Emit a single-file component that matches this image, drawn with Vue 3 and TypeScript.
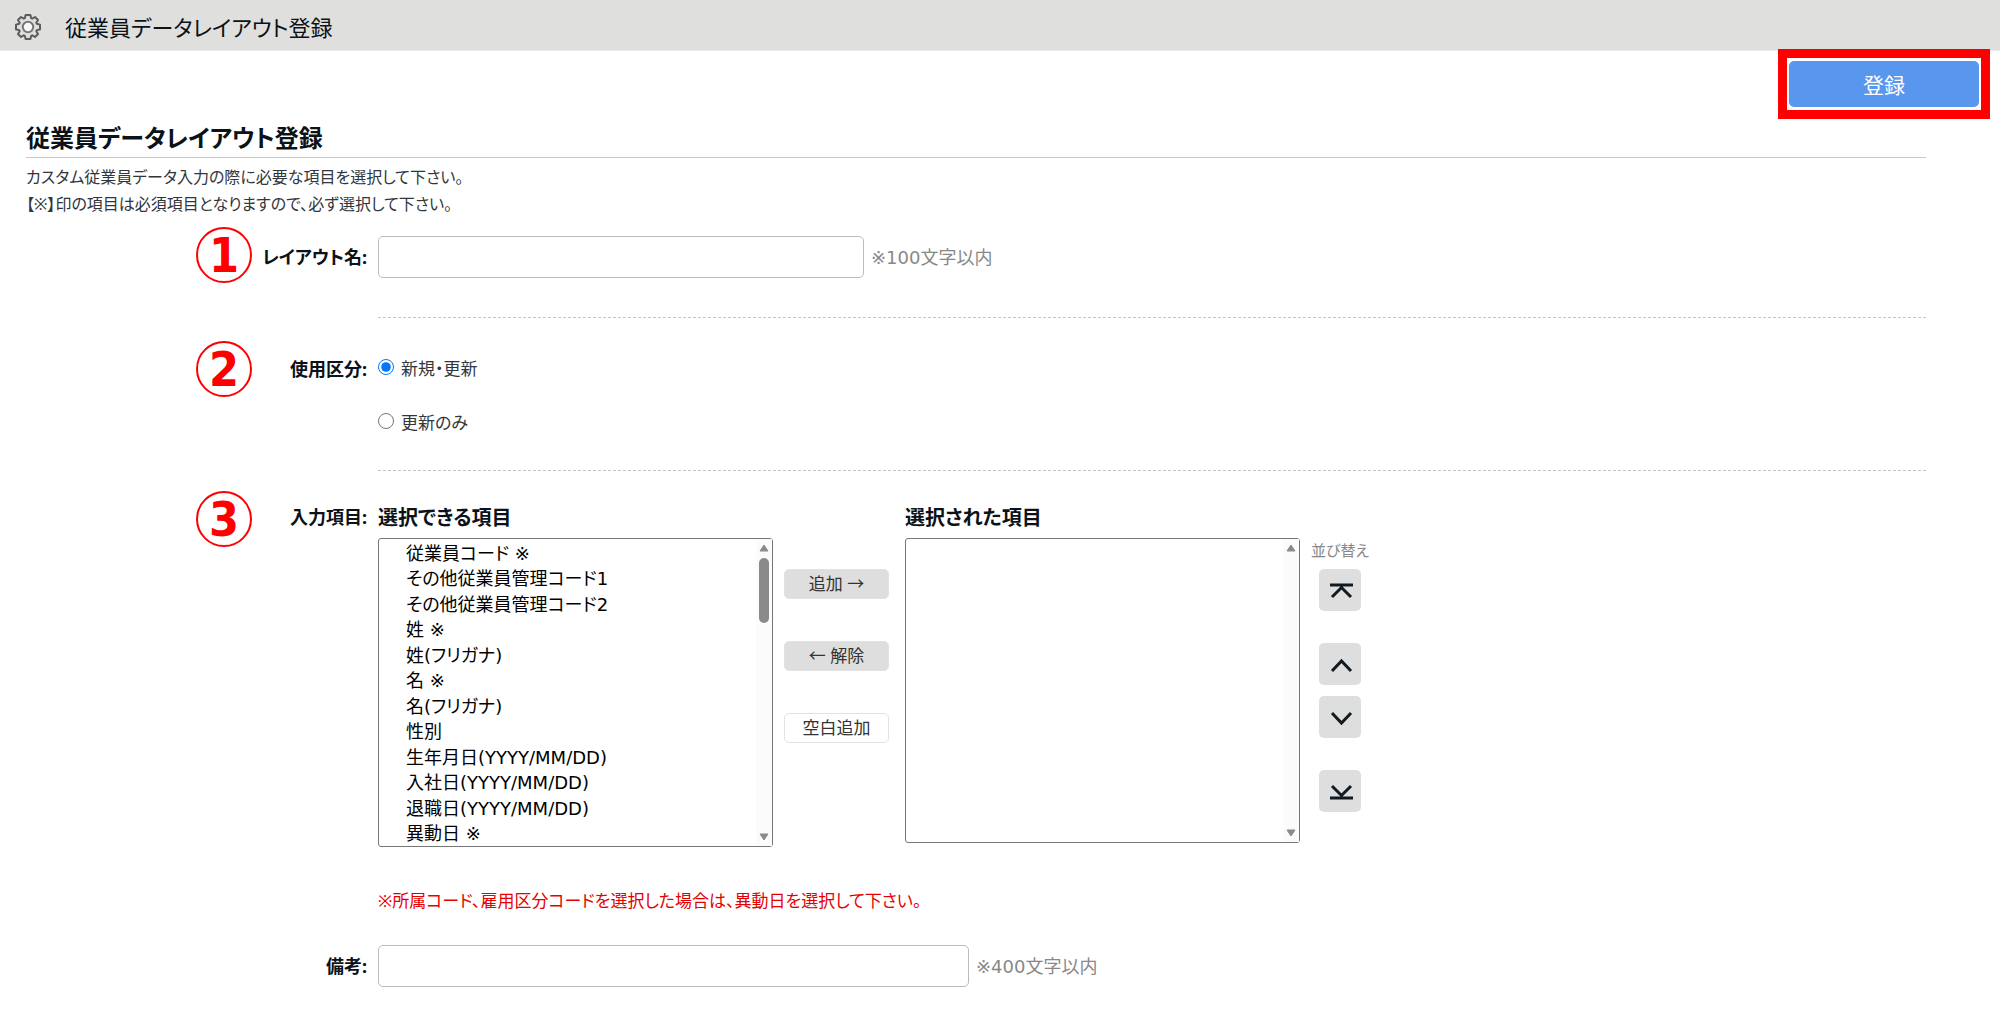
<script setup lang="ts">
import { ref } from 'vue'

const layoutName = ref('')
const usage = ref('both')
const note = ref('')
const available = ref<string[]>([
  '従業員コード ※',
  'その他従業員管理コード1',
  'その他従業員管理コード2',
  '姓 ※',
  '姓(フリガナ)',
  '名 ※',
  '名(フリガナ)',
  '性別',
  '生年月日(YYYY/MM/DD)',
  '入社日(YYYY/MM/DD)',
  '退職日(YYYY/MM/DD)',
  '異動日 ※',
])
const selected = ref<string[]>([])
const pickedLeft = ref<string[]>([])
const pickedRight = ref<string[]>([])

function add() {
  selected.value.push(...pickedLeft.value)
  available.value = available.value.filter((i) => !pickedLeft.value.includes(i))
  pickedLeft.value = []
}
function remove() {
  available.value.push(...pickedRight.value.filter((i) => i !== '(空白)'))
  selected.value = selected.value.filter((i) => !pickedRight.value.includes(i))
  pickedRight.value = []
}
function addBlank() {
  selected.value.push('(空白)')
}
function move(to: 'top' | 'up' | 'down' | 'bottom') {
  const from = selected.value.indexOf(pickedRight.value[0])
  if (from < 0) return
  const last = selected.value.length - 1
  const target = { top: 0, up: Math.max(0, from - 1), down: Math.min(last, from + 1), bottom: last }[to]
  const [item] = selected.value.splice(from, 1)
  selected.value.splice(target, 0, item)
}
</script>

<template>
  <div class="page">
    <header class="bar">
      <svg class="gear" viewBox="0 0 28 28" aria-hidden="true">
        <path
          d="M10.8 5.2 L11.6 2 H16.4 L17.2 5.2 L18.2 5.7 L21 4 L24 7 L22.3 9.8 L22.8 10.8 L26 11.6 V16.4 L22.8 17.2 L22.3 18.2 L24 21 L21 24 L18.2 22.3 L17.2 22.8 L16.4 26 H11.6 L10.8 22.8 L9.8 22.3 L7 24 L4 21 L5.7 18.2 L5.2 17.2 L2 16.4 V11.6 L5.2 10.8 L5.7 9.8 L4 7 L7 4 L9.8 5.7 Z"
        />
        <circle cx="14" cy="14" r="5.2" />
      </svg>
      <span class="bar-title">従業員データレイアウト登録</span>
    </header>

    <div class="actions">
      <div class="frame"><button type="button" class="submit">登録</button></div>
    </div>

    <main class="content">
      <h1>従業員データレイアウト登録</h1>
      <p class="lead">
        カスタム従業員データ入力の際に必要な項目を選択して下さい。<br />【※】印の項目は必須項目となりますので、必ず選択して下さい。
      </p>

      <div class="row row-name">
        <span class="mark">1</span>
        <label class="name" for="layout">レイアウト名:</label>
        <div class="field">
          <input id="layout" v-model="layoutName" class="text" type="text" maxlength="100" />
          <span class="hint">※100文字以内</span>
        </div>
      </div>

      <hr />

      <div class="row row-usage" role="radiogroup" aria-labelledby="usage">
        <span class="mark">2</span>
        <span id="usage" class="name">使用区分:</span>
        <div class="radios">
          <label><input v-model="usage" type="radio" name="usage" value="both" />新規・更新</label>
          <label><input v-model="usage" type="radio" name="usage" value="update" />更新のみ</label>
        </div>
      </div>

      <hr />

      <div class="row row-items">
        <span class="mark">3</span>
        <span class="name">入力項目:</span>
        <div class="picker">
          <div class="list">
            <label class="list-title" for="available">選択できる項目</label>
            <div class="box">
              <select id="available" v-model="pickedLeft" multiple size="12">
                <option v-for="item in available" :key="item" :value="item">{{ item }}</option>
              </select>
              <span class="scroll" aria-hidden="true">
                <svg viewBox="0 0 10 8"><path d="M5 1 L9 7 H1 Z" /></svg>
                <i class="thumb"></i>
                <svg viewBox="0 0 10 8"><path d="M5 7 L9 1 H1 Z" /></svg>
              </span>
            </div>
          </div>

          <div class="transfer">
            <button type="button" @click="add">追加 →</button>
            <button type="button" @click="remove">← 解除</button>
            <button type="button" class="plain" @click="addBlank">空白追加</button>
          </div>

          <div class="list">
            <label class="list-title" for="selected">選択された項目</label>
            <div class="box box-selected">
              <select id="selected" v-model="pickedRight" multiple size="12">
                <option v-for="(item, i) in selected" :key="i" :value="item">{{ item }}</option>
              </select>
              <span class="scroll" aria-hidden="true">
                <svg viewBox="0 0 10 8"><path d="M5 1 L9 7 H1 Z" /></svg>
                <svg viewBox="0 0 10 8"><path d="M5 7 L9 1 H1 Z" /></svg>
              </span>
            </div>
          </div>

          <div class="sort">
            <span class="sort-title">並び替え</span>
            <button type="button" aria-label="先頭へ" @click="move('top')">
              <svg viewBox="0 0 42 42"><path d="M11 16 H34 M13 28 L22.5 18.5 L32 28" /></svg>
            </button>
            <button type="button" class="apart" aria-label="上へ" @click="move('up')">
              <svg viewBox="0 0 42 42"><path d="M13 28 L22.5 18 L32 28" /></svg>
            </button>
            <button type="button" aria-label="下へ" @click="move('down')">
              <svg viewBox="0 0 42 42"><path d="M13 17 L22.5 27 L32 17" /></svg>
            </button>
            <button type="button" class="apart" aria-label="末尾へ" @click="move('bottom')">
              <svg viewBox="0 0 42 42"><path d="M11 28 H34 M13 16 L22.5 25.5 L32 16" /></svg>
            </button>
          </div>
        </div>
      </div>

      <p class="warning">※所属コード、雇用区分コードを選択した場合は、異動日を選択して下さい。</p>

      <div class="row row-note">
        <span></span>
        <label class="name" for="note">備考:</label>
        <div class="field">
          <input id="note" v-model="note" class="text wide" type="text" maxlength="400" />
          <span class="hint">※400文字以内</span>
        </div>
      </div>
    </main>
  </div>
</template>

<style>
body {
  margin: 0;
  background: #fff;
}
</style>

<style scoped>
.page {
  font-family: 'Noto Sans', 'Noto Sans CJK JP', sans-serif;
  font-feature-settings: 'palt';
  font-size: 18px;
  line-height: 28px;
  color: #0b1218;
  padding-bottom: 24px;
}
*,
*::before {
  box-sizing: border-box;
}
button,
input,
select {
  font: inherit;
  font-feature-settings: inherit;
  color: inherit;
  margin: 0;
}
.bar {
  display: flex;
  align-items: center;
  gap: 23px;
  height: 51px;
  padding: 4px 14px 0;
  background: #dfdfde;
  border-bottom: 1px solid #eaeaea;
}
.gear {
  width: 28px;
  height: 28px;
  fill: #dfdfde;
  stroke: #5c5c5c;
  stroke-width: 2;
  stroke-linejoin: round;
}
.gear circle {
  fill: #f8f8f8;
  stroke: #777;
}
.bar-title {
  font-size: 22px;
}
.actions {
  display: flex;
  justify-content: flex-end;
  margin-top: -2px;
  padding-right: 10px;
}
.frame {
  width: 212px;
  height: 70px;
  padding: 3px 2px;
  border: 9px solid #f00;
  background: #fff;
}
.submit {
  display: block;
  width: 100%;
  height: 46px;
  padding: 2px 0 0;
  border: 0;
  border-radius: 5px;
  background: #5997ef;
  color: #fff;
  font-size: 21px;
}
.content {
  margin: 0 74px 0 26px;
}
h1 {
  margin: 0;
  font-size: 24px;
  line-height: 38px;
  border-bottom: 1px solid #c8c8c8;
}
.lead {
  margin: 6px 0 9px;
  font-size: 16px;
  line-height: 27px;
  color: #30363b;
}
.row {
  display: grid;
  grid-template-columns: 56px 115px 1fr;
  align-items: start;
  padding-left: 170px;
}
.mark {
  width: 56px;
  height: 56px;
  border: 2px solid #f00;
  border-radius: 50%;
  color: #f00;
  font: bold 48px/52px 'DejaVu Sans Condensed', 'DejaVu Sans', sans-serif;
  text-align: center;
}
.name {
  margin-top: 14px;
  font-weight: bold;
  text-align: right;
}
.field,
.radios,
.picker {
  margin-left: 11px;
}
.field {
  display: flex;
  align-items: center;
  gap: 7px;
}
.row-name {
  min-height: 60px;
}
.row-name .field,
.row-name .name {
  margin-top: 0;
  align-self: center;
}
.text {
  width: 486px;
  height: 42px;
  padding: 0 10px;
  border: 1px solid #bbb;
  border-radius: 5px;
  background: #fff;
}
.text.wide {
  width: 591px;
}
.hint {
  padding-top: 2px;
  color: #888;
  font-family: 'DejaVu Sans', 'Noto Sans CJK JP', sans-serif;
  font-feature-settings: normal;
}
hr {
  margin: 30px 0 0 352px;
  border: 0;
  border-top: 1px dashed #c4c4c4;
}
.row-usage {
  margin-top: 23px;
  padding-bottom: 2px;
}
.radios {
  display: flex;
  flex-direction: column;
  gap: 24px;
  margin-top: 13px;
  font-size: 17px;
  line-height: 30px;
  color: #30363b;
}
.radios label {
  display: flex;
  align-items: center;
  gap: 7px;
}
.radios input {
  width: 16px;
  height: 16px;
  margin-bottom: 4px;
}
.row-items {
  margin-top: 20px;
}
.row-items .name {
  margin-top: 12px;
}
.picker {
  display: flex;
  align-items: flex-start;
  margin-top: 13px;
}
.list {
  width: 395px;
}
.list-title {
  display: block;
  margin-bottom: 6px;
  font-size: 20px;
  font-weight: bold;
}
.box {
  position: relative;
  height: 309px;
}
.box-selected {
  height: 305px;
}
.box select {
  display: block;
  width: 100%;
  height: 100%;
  padding: 0 16px 0 0;
  border: 1px solid #767676;
  border-radius: 3px;
  background: #fff;
  color: #000;
  font-family: 'DejaVu Sans', 'Noto Sans CJK JP', sans-serif;
  overflow: hidden;
}
.box option {
  height: 25px;
  min-height: 25px;
  padding: 0 0 0 27px;
  line-height: 25px;
}
.box option:nth-child(even) {
  height: 26px;
  min-height: 26px;
}
.scroll {
  position: absolute;
  top: 1px;
  right: 1px;
  bottom: 1px;
  width: 16px;
  display: flex;
  flex-direction: column;
  align-items: center;
  padding: 5px 0;
  background: #fbfbfb;
}
.scroll svg {
  width: 10px;
  height: 8px;
  fill: #8a8a8a;
  stroke: #8a8a8a;
  stroke-linejoin: round;
}
.scroll svg:last-child {
  margin-top: auto;
}
.thumb {
  width: 10px;
  height: 65px;
  margin-top: 6px;
  border-radius: 5px;
  background: #8a8a8a;
}
.transfer {
  display: flex;
  flex-direction: column;
  gap: 42px;
  width: 105px;
  margin: 65px 16px 0 11px;
}
.transfer button {
  height: 30px;
  padding: 0;
  border: 1px solid #e2e2e2;
  border-radius: 5px;
  background: #dedede;
  color: #333;
  font-size: 17px;
  line-height: 28px;
}
.transfer .plain {
  background: #fff;
}
.sort {
  display: flex;
  flex-direction: column;
  align-items: flex-start;
  gap: 11px;
  margin: 36px 0 0 11px;
}
.sort-title {
  height: 18px;
  color: #888;
  font-size: 15px;
  line-height: 20px;
}
.sort button {
  width: 42px;
  height: 42px;
  margin-left: 8px;
  padding: 0;
  border: 0;
  border-radius: 5px;
  background: #dedede;
}
.sort .apart {
  margin-top: 21px;
}
.sort svg {
  display: block;
  fill: none;
  stroke: #101a22;
  stroke-width: 3;
}
.warning {
  margin: 40px 0 30px 352px;
  color: #e60000;
  font-size: 17px;
}
.row-note {
  align-items: center;
}
.row-note .name {
  margin-top: 0;
}
</style>
